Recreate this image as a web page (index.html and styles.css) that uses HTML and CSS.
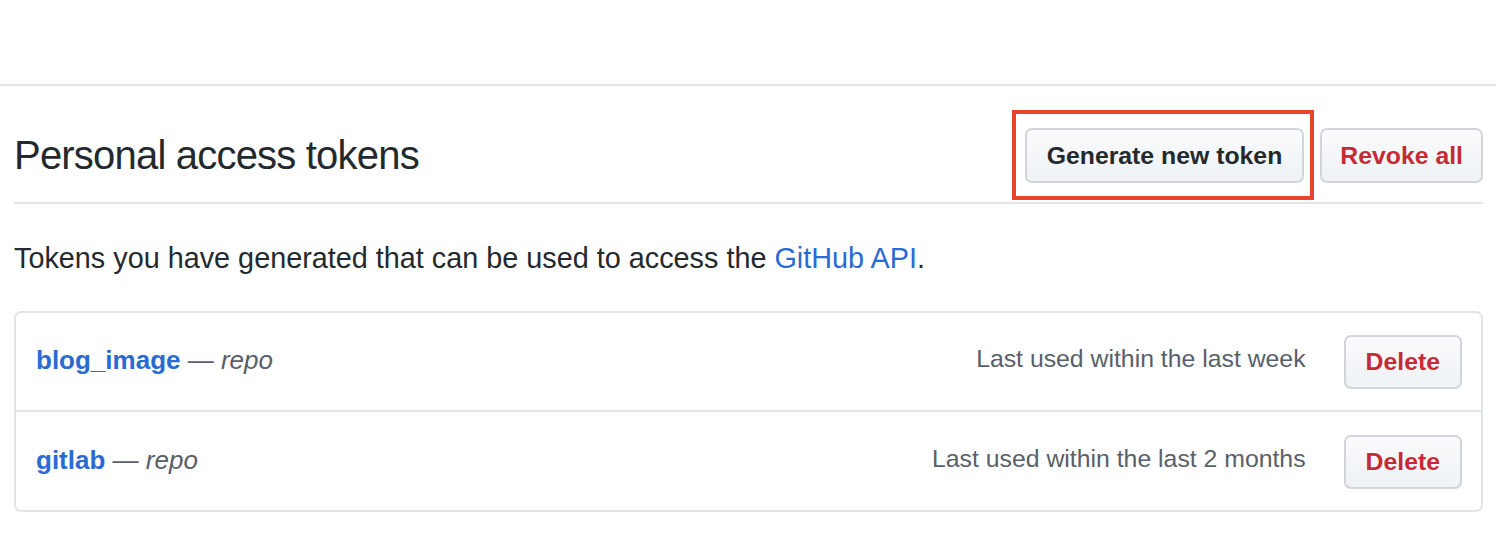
FILE: index.html
```html
<!DOCTYPE html>
<html lang="en">
<head>
<meta charset="utf-8">
<title>Personal access tokens</title>
<link rel="stylesheet" href="styles.css">
</head>
<body>
<div class="topbar"></div>
<main class="content">
  <div class="subhead">
    <h2 class="subhead-heading">Personal access tokens</h2>
    <div class="subhead-actions">
      <span class="highlight">
        <button class="btn" type="button">Generate new token</button>
      </span>
      <button class="btn btn-danger btn-revoke" type="button">Revoke all</button>
    </div>
  </div>
  <p class="intro">Tokens you have generated that can be used to access the <a class="link" href="#">GitHub API</a>.</p>
  <div class="token-list">
    <div class="token-row">
      <div class="token-name"><a class="token-link" href="#">blog_image</a> <span class="token-scope">— <em>repo</em></span></div>
      <span class="last-used">Last used within the last week</span>
      <button class="btn btn-danger btn-delete" type="button">Delete</button>
    </div>
    <div class="token-row">
      <div class="token-name"><a class="token-link" href="#">gitlab</a> <span class="token-scope">— <em>repo</em></span></div>
      <span class="last-used">Last used within the last 2 months</span>
      <button class="btn btn-danger btn-delete" type="button">Delete</button>
    </div>
  </div>
</main>
</body>
</html>
```
FILE: styles.css
```css
* {
  box-sizing: border-box;
}

html, body {
  margin: 0;
  padding: 0;
  background: #ffffff;
}

body {
  font-family: "Liberation Sans", Arial, sans-serif;
  color: #24292e;
}

.topbar {
  height: 86px;
  border-bottom: 2px solid #e1e4e8;
}

.content {
  padding: 0 13px 0 14px;
}

.subhead {
  display: flex;
  align-items: center;
  justify-content: space-between;
  padding: 42px 0 19px;
  border-bottom: 2px solid #e1e4e8;
}

.subhead-heading {
  margin: 0;
  font-size: 40px;
  font-weight: 400;
  line-height: 55px;
  letter-spacing: -0.8px;
  color: #24292e;
}

.subhead-actions {
  display: flex;
  align-items: center;
  gap: 16px;
}

.highlight {
  position: relative;
  display: inline-flex;
}

.highlight::after {
  content: "";
  position: absolute;
  top: -18px;
  left: -13px;
  right: -10px;
  bottom: -17px;
  border: 4px solid #e8432b;
  pointer-events: none;
}

.btn {
  display: inline-block;
  font-family: "Liberation Sans", Arial, sans-serif;
  font-size: 24.8px;
  font-weight: 700;
  line-height: 41px;
  padding: 5px 20px;
  color: #24292e;
  background: linear-gradient(180deg, #fafbfc 0%, #eff3f6 90%);
  border: 2px solid #d1d5da;
  border-radius: 7px;
  white-space: nowrap;
  cursor: pointer;
}

.btn-danger {
  color: #c62a35;
}

.btn-revoke {
  padding: 5px 18px;
}

.btn-delete {
  line-height: 40px;
  margin-left: 38px;
}

.intro {
  margin: 33px 0 31px;
  font-size: 28.8px;
  line-height: 1.5;
  color: #24292e;
}

.link {
  color: #2a6bd3;
  text-decoration: none;
}

.token-list {
  border: 2px solid #e1e4e8;
  border-radius: 7px;
}

.token-row {
  display: flex;
  align-items: center;
  padding: 22px 19px 21px 20px;
}

.token-row + .token-row {
  border-top: 2px solid #e1e4e8;
  padding-top: 23px;
}

.token-name {
  flex: 1;
  font-size: 26px;
  line-height: 1.5;
  margin-bottom: 4px;
  color: #586069;
}

.token-link {
  color: #2a6bd3;
  font-weight: 700;
  text-decoration: none;
}

.token-scope em {
  font-style: italic;
}

.last-used {
  font-size: 24.8px;
  line-height: 1.5;
  color: #586069;
  margin-bottom: 8px;
}
```
